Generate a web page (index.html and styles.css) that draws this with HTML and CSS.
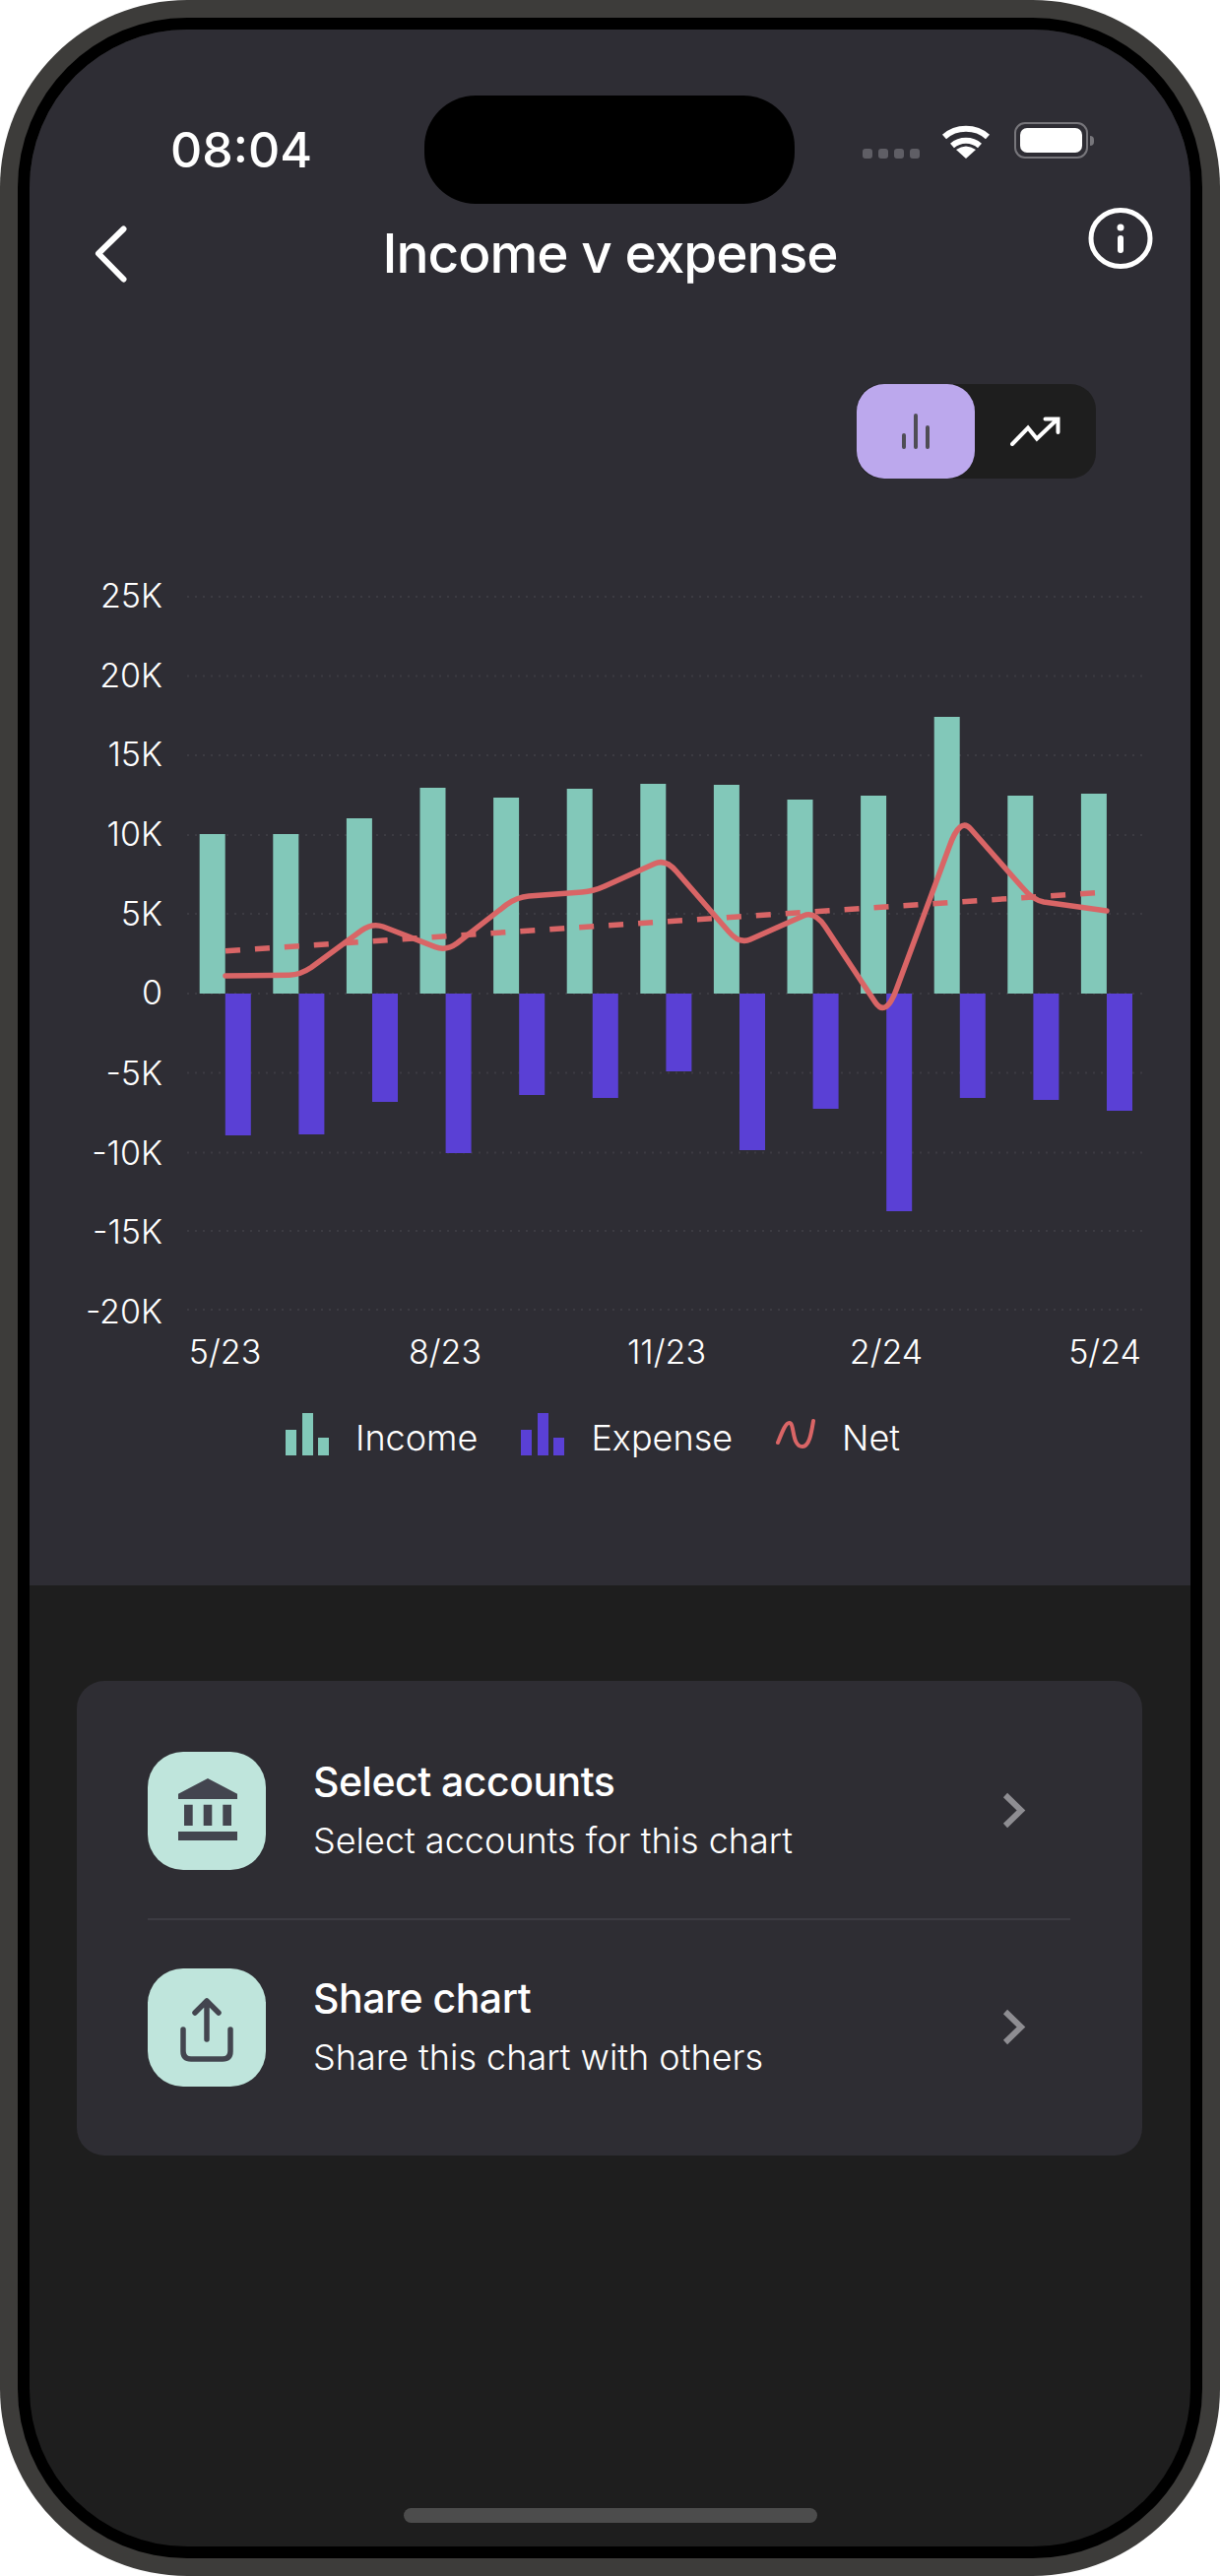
FILE: index.html
```html
<!DOCTYPE html>
<html lang="en">
<head>
  <meta charset="UTF-8">
  <title>Income v expense</title>
  <meta name="viewport" content="width=device-width,initial-scale=1">
  <link rel="stylesheet" href="styles.css">
</head>
<body>
<div class="phone">
  <div class="bezel">
    <div class="screen">
      <div class="top">
        <div class="status">
          <span class="time">08:04</span>
          <div class="island"></div>
          <div class="status-icons">
            <div class="dots"><i></i><i></i><i></i><i></i></div>
            <svg class="wifi" width="50" height="35" viewBox="0 0 50 35">
              <path class="wifi-arc" d="M3 13C15 2 35 2 47 13"/>
              <path class="wifi-arc" d="M11 22C19 15 31 15 39 22"/>
              <path class="wifi-fan" d="M25 35L15 26Q25 19 35 26Z"/>
            </svg>
            <div class="battery"><div class="battery-fill"></div></div>
            <div class="battery-tip"></div>
          </div>
        </div>

        <div class="header">
          <svg class="back" width="36" height="60" viewBox="0 0 36 60">
            <path class="stroke-white" d="M29.5 4.5L4 29.5L29.5 55.5"/>
          </svg>
          <h1 class="title">Income v expense</h1>
          <svg class="info" width="66" height="62" viewBox="0 0 66 62">
            <ellipse class="info-ring" cx="33" cy="31" rx="30" ry="28.5"/>
            <circle class="fill-white" cx="33" cy="20" r="3.5"/>
            <path class="stroke-white" d="M33 31V43"/>
          </svg>
        </div>

        <div class="toggle">
          <div class="toggle-btn active">
            <svg width="32" height="36" viewBox="0 0 32 36">
              <path class="toggle-bars" d="M4 22V34M16 2V34M28 14V34"/>
            </svg>
          </div>
          <div class="toggle-btn">
            <svg width="52" height="30" viewBox="0 0 52 30">
              <path class="toggle-arrow" d="M2 28L18 11.500L27 22.500L48 2.500M35.500 2.500H48.500V16"/>
            </svg>
          </div>
        </div>

        <svg class="chart" width="1083" height="820" viewBox="78 620 1083 820">
          <g class="grid">
            <path d="M190 639H1160"/><path d="M190 719.500H1160"/><path d="M190 800H1160"/>
            <path d="M190 881H1160"/><path d="M190 961H1160"/><path d="M190 1042H1160"/>
            <path d="M190 1122.500H1160"/><path d="M190 1203.500H1160"/><path d="M190 1283H1160"/>
            <path d="M190 1363H1160"/>
          </g>
          <g class="income">
            <rect x="202.700" y="880" width="26" height="162"/>
            <rect x="277.300" y="880" width="26" height="162"/>
            <rect x="351.900" y="864" width="26" height="178"/>
            <rect x="426.500" y="833" width="26" height="209"/>
            <rect x="501.100" y="843" width="26" height="199"/>
            <rect x="575.700" y="834" width="26" height="208"/>
            <rect x="650.300" y="829" width="26" height="213"/>
            <rect x="724.900" y="830" width="26" height="212"/>
            <rect x="799.500" y="845" width="26" height="197"/>
            <rect x="874.100" y="841" width="26" height="201"/>
            <rect x="948.700" y="761" width="26" height="281"/>
            <rect x="1023.300" y="841" width="26" height="201"/>
            <rect x="1097.900" y="839" width="26" height="203"/>
          </g>
          <g class="expense">
            <rect x="228.800" y="1042" width="26" height="144"/>
            <rect x="303.400" y="1042" width="26" height="143"/>
            <rect x="378" y="1042" width="26" height="110"/>
            <rect x="452.600" y="1042" width="26" height="162"/>
            <rect x="527.200" y="1042" width="26" height="103"/>
            <rect x="601.800" y="1042" width="26" height="106"/>
            <rect x="676.400" y="1042" width="26" height="79"/>
            <rect x="751" y="1042" width="26" height="159"/>
            <rect x="825.600" y="1042" width="26" height="117"/>
            <rect x="900.200" y="1042" width="26" height="221"/>
            <rect x="974.800" y="1042" width="26" height="106"/>
            <rect x="1049.400" y="1042" width="26" height="108"/>
            <rect x="1124" y="1042" width="26" height="119"/>
          </g>
          <path class="trend" d="M229 998.700L1112 939.700"/>
          <path class="net" d="M229 1024L293.600 1023.200Q305 1023 316 1015.500L367 978Q378 970 389 974L442 994.600Q453 999 464 991L514 952Q525 944 537 943L591 939Q603 938 614 933L665 910Q676 905 687 918L740 979Q751 992 762 987L816 963Q827 958 838 974L889 1051Q900 1067 911 1036L964 893Q975 862 986 875L1038 934Q1049 947 1060 949L1124 958"/>
          <g class="y-labels">
            <text x="165" y="650">25K</text>
            <text x="165" y="731">20K</text>
            <text x="165" y="811">15K</text>
            <text x="165" y="892">10K</text>
            <text x="165" y="973">5K</text>
            <text x="165" y="1053">0</text>
            <text x="165" y="1135">-5K</text>
            <text x="165" y="1216">-10K</text>
            <text x="165" y="1296">-15K</text>
            <text x="165" y="1377">-20K</text>
          </g>
          <g class="x-labels">
            <text x="228.500" y="1418">5/23</text>
            <text x="452" y="1418">8/23</text>
            <text x="677" y="1418">11/23</text>
            <text x="900" y="1418">2/24</text>
            <text x="1122" y="1418">5/24</text>
          </g>
        </svg>

        <div class="legend">
          <div class="legend-item">
            <div class="legend-bars income-bars"><i class="low"></i><i class="high"></i><i class="min"></i></div>
            <span>Income</span>
          </div>
          <div class="legend-item">
            <div class="legend-bars expense-bars"><i class="low"></i><i class="high"></i><i class="min"></i></div>
            <span>Expense</span>
          </div>
          <div class="legend-item">
            <svg class="legend-net" width="40" height="30" viewBox="0 0 40 30">
              <path d="M2 24C6 14 10 3 14 4C19 5 16 28 27 28C34 28 36 14 38 2"/>
            </svg>
            <span>Net</span>
          </div>
        </div>
      </div>

      <div class="bottom">
        <div class="card">
          <div class="row first">
            <div class="tile">
              <svg width="120" height="120" viewBox="0 0 120 120">
                <path class="icon-fill" d="M61 27L91 42.700V48H31V42.700ZM37 53.700H45.700V75H37ZM56.700 53.700H65.300V75H56.700ZM76.300 53.700H85V75H76.300ZM31 81H91V90H31Z"/>
              </svg>
            </div>
            <div class="row-text">
              <div class="row-title">Select accounts</div>
              <div class="row-sub">Select accounts for this chart</div>
            </div>
            <svg class="chev" width="24" height="40" viewBox="0 0 24 40">
              <path d="M3 4L19 19.500L3 35"/>
            </svg>
          </div>
          <div class="row">
            <div class="tile">
              <svg width="120" height="120" viewBox="0 0 120 120">
                <path class="icon-line" d="M36 62V84Q36 92 44 92H76Q84 92 84 84V62M60 33V72M48 45L60 33L72 45"/>
              </svg>
            </div>
            <div class="row-text">
              <div class="row-title">Share chart</div>
              <div class="row-sub">Share this chart with others</div>
            </div>
            <svg class="chev" width="24" height="40" viewBox="0 0 24 40">
              <path d="M3 4L19 19.500L3 35"/>
            </svg>
          </div>
        </div>
        <div class="home"></div>
      </div>
    </div>
  </div>
</div>
</body>
</html>
```
FILE: styles.css
```css
* { box-sizing:border-box; }
body { margin:0; background:#fff; font-family:"Inter","Liberation Sans",sans-serif; color:#fff; }

.phone { width:1239px; height:2616px; padding:18px; background:#3d3c3a; border-radius:190px; }
.bezel { height:100%; padding:12px; background:#000; border-radius:172px; }
.screen { height:100%; display:flex; flex-direction:column; background:#1e1e1e; border-radius:160px; overflow:hidden; }

.top { height:1580px; background:#2e2d34; flex:none; }

/* status bar */
.status { display:flex; align-items:center; height:110px; margin-top:33.5px; padding-left:143px; position:relative; top:33.5px; }
.time { width:258px; font-size:50px; font-weight:500; line-height:1; }
.island { width:376px; height:110px; background:#000; border-radius:52px; }
.status-icons { display:flex; align-items:flex-end; margin-left:69px; margin-bottom:19px; }
.dots { display:flex; gap:6px; margin-right:22px; }
.dots i { display:block; width:10px; height:10px; border-radius:3px; background:#5f5e65; }
.wifi { margin-right:24px; }
.wifi-arc { fill:none; stroke:#fff; stroke-width:6; }
.wifi-fan { fill:#fff; }
.battery { width:75px; height:37px; padding:4px; border:2.5px solid #77767b; border-radius:11px; }
.battery-fill { height:100%; background:#fff; border-radius:7px; }
.battery-tip { width:4px; height:10px; margin:0 0 13px 2px; background:#77767b; border-radius:0 5px 5px 0; }

/* header */
.header { display:grid; grid-template-columns:1fr auto 1fr; align-items:center; height:94px; margin-top:37px; }
.back { margin-left:66px; }
.title { margin:0; font-size:55px; font-weight:500; letter-spacing:-1px; line-height:1; }
.info { justify-self:end; align-self:start; margin-right:38px; }
.info-ring { fill:none; stroke:#fff; stroke-width:5; }
.stroke-white { fill:none; stroke:#fff; stroke-width:6; stroke-linecap:round; stroke-linejoin:round; }
.fill-white { fill:#fff; }

/* bar / line switch */
.toggle { display:flex; width:243px; height:96px; margin:85px 96px 0 auto; background:#1e1e1e; border-radius:26px; }
.toggle-btn { display:flex; align-items:center; justify-content:center; flex:1; }
.toggle-btn.active { flex:none; width:120px; background:#bca8ed; border-radius:28px; }
.toggle-bars { fill:none; stroke:#4f4d55; stroke-width:4; stroke-linecap:round; }
.toggle-arrow { fill:none; stroke:#fff; stroke-width:4; stroke-linecap:round; }

/* chart */
.chart { display:block; margin:101px 0 0 48px; }
.grid path { stroke:#3c3b42; stroke-width:2; stroke-dasharray:2 6; }
.income rect { fill:#82c8b9; }
.expense rect { fill:#5a40d5; }
.trend { fill:none; stroke:#d96566; stroke-width:5.5; stroke-dasharray:15 15; }
.net { fill:none; stroke:#d96566; stroke-width:5.5; stroke-linecap:round; stroke-linejoin:round; }
.y-labels text { fill:#fff; font-size:34px; font-weight:300; text-anchor:end; }
.x-labels text { fill:#fff; font-size:34px; font-weight:300; text-anchor:middle; }

/* legend */
.legend { display:flex; align-items:flex-end; height:43px; margin:28px 0 0 260px; font-size:36px; font-weight:300; }
.legend-item { display:flex; align-items:flex-end; margin-right:44px; }
.legend-item span { margin-left:27px; line-height:1; }
.legend-bars { display:flex; align-items:flex-end; gap:5.5px; height:43px; }
.legend-bars i { display:block; width:11px; }
.legend-bars .low { height:26px; }
.legend-bars .high { height:43px; }
.legend-bars .min { height:18px; }
.income-bars i { background:#82c8b9; }
.expense-bars i { background:#5a40d5; }
.legend-net { margin-bottom:7px; }
.legend-net path { fill:none; stroke:#d96566; stroke-width:4; stroke-linecap:round; }

/* options card */
.bottom { flex:1; display:flex; flex-direction:column; }
.card { width:1082px; margin:97px 0 0 48px; padding:72px 73px 70px 72px; background:#2e2d33; border-radius:28px; }
.row { display:flex; align-items:center; }
.row.first { padding-bottom:49px; margin-bottom:49px; border-bottom:2px solid #3c3b42; }
.tile { width:120px; height:120px; flex:none; background:#bfe5dc; border-radius:36px; }
.tile svg { display:block; }
.icon-fill { fill:#43454f; }
.icon-line { fill:none; stroke:#43454f; stroke-width:5.5; stroke-linecap:round; stroke-linejoin:round; }
.row-text { flex:1; margin-left:48px; }
.row-title { font-size:41px; font-weight:500; letter-spacing:-.5px; line-height:60px; }
.row-sub { font-size:36px; font-weight:300; line-height:60px; }
.chev { margin-right:45px; }
.chev path { fill:none; stroke:#8e8d92; stroke-width:6; }
.home { width:420px; height:15px; margin:auto auto 24px; background:#4c4c4c; border-radius:8px; }
```
